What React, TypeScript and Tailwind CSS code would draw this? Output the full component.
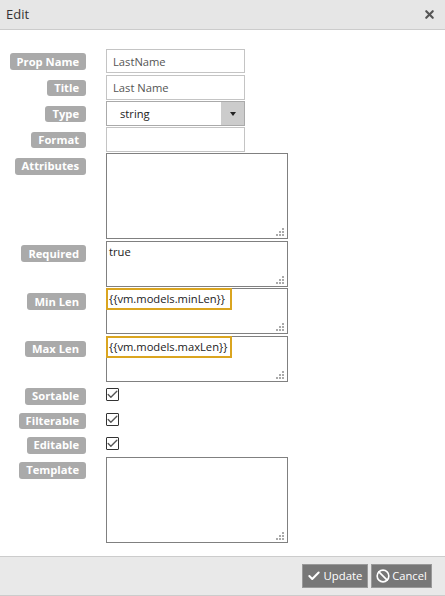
import React from 'react';
import { Check, Ban, X } from 'lucide-react';

const font = "font-['Open_Sans',sans-serif]";

const Label: React.FC<{ text: string; className?: string; short?: boolean; lift?: boolean }> = ({ text, className, short, lift }) => (
  <div className={`w-[86px] shrink-0 flex justify-end ${className ?? ''}`}>
    <span
      className={`px-[7px] rounded-[3px] bg-[#aaaaaa] text-white font-bold text-[11.2px] whitespace-nowrap ${
        short ? 'h-[16px] leading-[16px]' : lift ? 'h-[17px] leading-[15px]' : 'h-[17px] leading-[17px]'
      }`}
    >
      {text}
    </span>
  </div>
);

const Grip = () => (
  <svg width="9" height="9" viewBox="0 0 9 9" className="absolute right-[2px] bottom-[1px]" fill="#aaaaaa">
    <rect x="6" y="0" width="2" height="2" />
    <rect x="3" y="3" width="2" height="2" />
    <rect x="6" y="3" width="2" height="2" />
    <rect x="0" y="6" width="2" height="2" />
    <rect x="3" y="6" width="2" height="2" />
    <rect x="6" y="6" width="2" height="2" />
  </svg>
);

const TextBox: React.FC<{ h: string; value?: string; outlined?: boolean }> = ({ h, value, outlined }) => (
  <div className={`relative w-[182px] border border-[#808080] bg-white ${h}`}>
    {value && !outlined && <div className="pl-[2px] pt-[1px] text-[11.2px] leading-[18px] text-[#222222]">{value}</div>}
    {value && outlined && (
      <div className="w-[126px] h-[22px] -mt-px -ml-px border-2 border-[#daa520] pl-[1px] text-[11.2px] leading-[18px] text-[#222222] whitespace-nowrap">
        {value}
      </div>
    )}
    <Grip />
  </div>
);

const Row: React.FC<{
  label: string;
  className?: string;
  labelClass?: string;
  short?: boolean;
  lift?: boolean;
  children: React.ReactNode;
}> = ({ label, className, labelClass, short, lift, children }) => (
  <div className={`flex gap-[20px] ${className ?? ''}`}>
    <Label text={label} className={labelClass} short={short} lift={lift} />
    {children}
  </div>
);

const CheckBox = () => (
  <div className="w-[13px] h-[13px] border border-[#333333] rounded-[1px] bg-white flex items-center justify-center">
    <Check size={13} strokeWidth={2.5} className="text-[#555555] shrink-0" />
  </div>
);

export default function App() {
  return (
    <div className={`${font} w-[445px] h-[596px] bg-white flex flex-col text-[#333333]`}>
      <div className="h-[30px] shrink-0 bg-[#e6e6e6] border-b border-[#cccccc] flex items-center justify-between pl-[6px] pr-[9px]">
        <span className="text-[13px] text-[#333333]">Edit</span>
        <X size={13} strokeWidth={4} className="text-[#555555]" />
      </div>

      <div className="flex-1 pt-[19px]">
        <Row label="Prop Name" labelClass="pt-[4px]" className="mb-[2px]">
          <div className="w-[139px] h-[24px] border border-[#c4c4c4] pl-[6px] text-[11.2px] leading-[23px] text-[#555555]">LastName</div>
        </Row>
        <Row label="Title" labelClass="pt-[5px]" className="mb-px" short>
          <div className="w-[139px] h-[25px] border border-[#c4c4c4] pl-[6px] text-[11.2px] leading-[23px] text-[#555555]">Last Name</div>
        </Row>
        <Row label="Type" labelClass="pt-[5px]" className="mb-px" short>
          <div className="w-[139px] h-[25px] border border-[#aaaaaa] flex">
            <div className="flex-1 pl-[13px] text-[11.2px] leading-[23px] text-[#222222]">string</div>
            <div className="w-[23px] bg-[#cccccc] flex items-center justify-center">
              <div className="w-0 h-0 border-l-[3px] border-r-[3px] border-t-[4px] border-l-transparent border-r-transparent border-t-[#222222]" />
            </div>
          </div>
        </Row>
        <Row label="Format" labelClass="pt-[5px]" className="mb-px" short>
          <div className="w-[139px] h-[25px] border border-[#c4c4c4]" />
        </Row>
        <Row label="Attributes" className="mb-[2px]" labelClass="pt-[5px]" lift>
          <TextBox h="h-[86px]" />
        </Row>
        <Row label="Required" className="mb-px" labelClass="pt-[4px]">
          <TextBox h="h-[46px]" value="true" />
        </Row>
        <Row label="Min Len" className="mb-[2px]" labelClass="pt-[5px]">
          <TextBox h="h-[46px]" value="{{vm.models.minLen}}" outlined />
        </Row>
        <Row label="Max Len" className="mb-[6px]" labelClass="pt-[5px]" short>
          <TextBox h="h-[46px]" value="{{vm.models.maxLen}}" outlined />
        </Row>
        <Row label="Sortable" className="h-[25px]" lift>
          <CheckBox />
        </Row>
        <Row label="Filterable" className="h-[24px]" short>
          <CheckBox />
        </Row>
        <Row label="Editable" className="h-[20px]" lift>
          <CheckBox />
        </Row>
        <Row label="Template" labelClass="pt-[5px]" lift>
          <TextBox h="h-[86px]" />
        </Row>
      </div>

      <div className="h-[40px] shrink-0 bg-[#e9e9e9] border-t border-b border-[#cccccc] flex items-center justify-end gap-[3px] pr-[13px]">
        <button className="h-[24px] w-[66px] bg-[#777777] border border-[#999999] text-white text-[11.4px] flex items-center justify-center gap-[2px]">
          <Check size={14} strokeWidth={3.5} />
          Update
        </button>
        <button className="h-[24px] w-[61px] bg-[#777777] border border-[#999999] text-white text-[11.2px] flex items-center justify-center gap-[2px]">
          <Ban size={14} strokeWidth={2.8} />
          Cancel
        </button>
      </div>
    </div>
  );
}
